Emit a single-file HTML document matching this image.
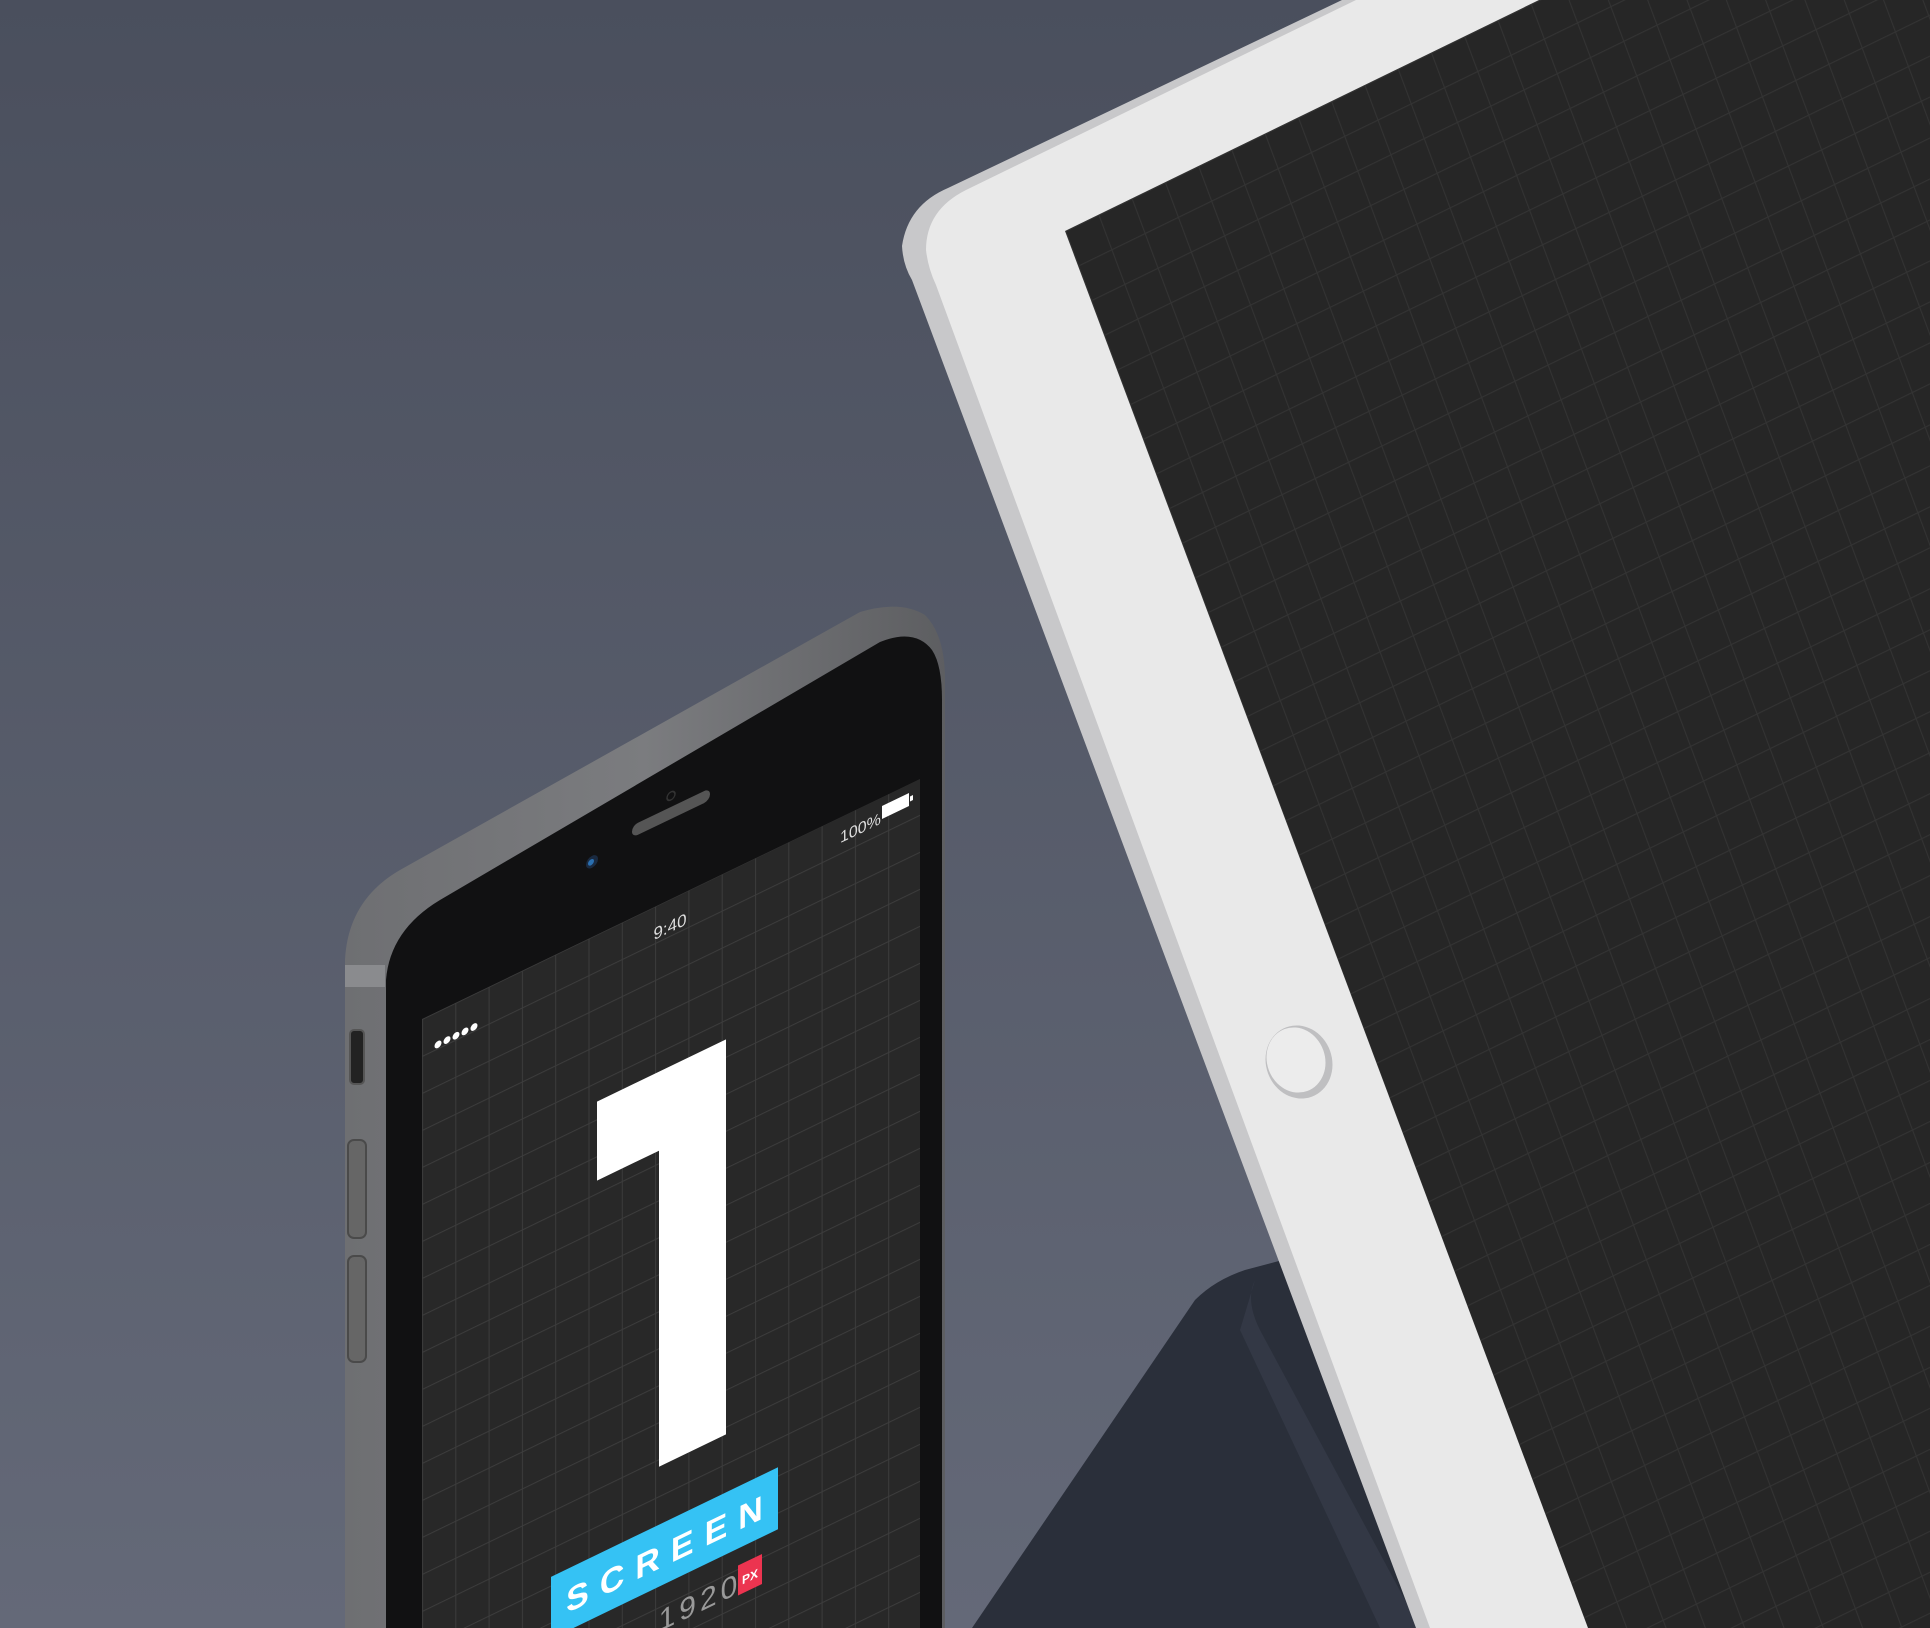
<!DOCTYPE html>
<html><head><meta charset="utf-8"><style>
html,body{margin:0;padding:0;width:1930px;height:1628px;overflow:hidden;background:#525868}
svg{display:block}
</style></head><body>
<svg width="1930" height="1628" viewBox="0 0 1930 1628" xmlns="http://www.w3.org/2000/svg">
<defs>
<linearGradient id="bg" x1="0" y1="0" x2="0" y2="1">
<stop offset="0" stop-color="#4a4f5d"/><stop offset="1" stop-color="#646978"/>
</linearGradient>
<linearGradient id="body" x1="0" y1="0" x2="1" y2="0">
<stop offset="0" stop-color="#6e6f72"/><stop offset="0.5" stop-color="#7b7c7f"/><stop offset="1" stop-color="#5d5e61"/>
</linearGradient>
<pattern id="pg" width="37" height="37" patternUnits="userSpaceOnUse" patternTransform="matrix(0.9,-0.436,0,1,422,1019)">
<rect width="37" height="37" fill="#282828"/>
<path d="M0 0.5H37M0.5 0V37" stroke="#3c3c3c" stroke-width="1.2"/>
</pattern>
<pattern id="ig" width="37" height="37" patternUnits="userSpaceOnUse" patternTransform="matrix(0.899,-0.438,0.35,0.937,1065,231)">
<rect width="37" height="37" fill="#262626"/>
<path d="M0 0.5H37M0.5 0V37" stroke="#333" stroke-width="1.2"/>
</pattern>
</defs>
<rect width="1930" height="1628" fill="url(#bg)"/>

<!-- smart cover -->
<path d="M972 1628 L1195 1300 Q1215 1280 1245 1270 L1320 1250 L1420 1628 Z" fill="#2a2f3a"/>
<path d="M1255 1280 Q1245 1300 1260 1330 L1420 1628 L1380 1628 L1240 1330 Z" fill="#333845"/>

<!-- iPad -->
<path d="M1342 0 L948 188 Q908 205 902 246 Q903 265 912 280 L1416 1628 L1930 1628 L1930 0 Z" fill="#c8c8ca"/>
<path d="M1356 0 L966 190 Q926 210 926 250 Q928 268 936 285 L1430 1628 L1930 1628 L1930 0 Z" fill="#e9e9e9"/>
<path d="M1065 231 L1539 0 L1930 0 L1930 1628 L1588 1628 Z" fill="url(#ig)"/>
<ellipse cx="1299" cy="1062" rx="33" ry="37" fill="#bfbfc1" transform="rotate(-20 1299 1062)"/>
<ellipse cx="1296" cy="1060" rx="29" ry="33" fill="#ececec" transform="rotate(-20 1296 1060)"/>

<!-- iPhone body -->
<path d="M345 1628 L345 960 Q348 900 400 870 L860 612 Q900 600 925 615 Q945 635 945 680 L945 1628 Z" fill="url(#body)"/>
<rect x="345" y="965" width="40" height="22" fill="#8a8b8e"/>
<path d="M386 1628 L386 980 Q390 930 440 900 L880 642 Q915 628 932 650 Q942 665 942 700 L942 1628 Z" fill="#111112"/>
<rect x="350" y="1030" width="14" height="54" rx="4" fill="#222" stroke="#555" stroke-width="2"/>
<rect x="348" y="1140" width="18" height="98" rx="6" fill="#666" stroke="#4a4a4a" stroke-width="2"/>
<rect x="348" y="1256" width="18" height="106" rx="6" fill="#666" stroke="#4a4a4a" stroke-width="2"/>
<path d="M422 1019 L920 779 L920 1628 L422 1628 Z" fill="url(#pg)"/>
<g transform="matrix(1,-0.48,0,1,0,0)">
<rect x="632" y="1129" width="78" height="12" rx="6" fill="#555"/>
<circle cx="592" cy="1146" r="6" fill="#1a2a40"/>
<circle cx="591" cy="1146" r="3" fill="#2a6fb0"/>
<circle cx="671" cy="1118" r="4" fill="none" stroke="#333" stroke-width="1.5"/>
</g>
<g transform="matrix(1,-0.483,0,1,0,0)" font-family="Liberation Sans, sans-serif">
<text x="670" y="1256" fill="#ddd" font-size="17" text-anchor="middle">9:40</text>
<text x="840" y="1249" fill="#ddd" font-size="16">100%</text>
<rect x="882" y="1232" width="27" height="13" fill="#fff"/>
<rect x="910" y="1236" width="3" height="5" fill="#fff"/>
<g fill="#fff"><circle cx="438" cy="1256" r="3.5"/><circle cx="447" cy="1256" r="3.5"/><circle cx="456" cy="1256" r="3.5"/><circle cx="465" cy="1256" r="3.5"/><circle cx="474" cy="1256" r="3.5"/></g>
<path d="M597 1390 L726 1390 L726 1785 L659 1785 L659 1469 L597 1469 Z" fill="#fff"/>
<rect x="551" y="1843" width="227" height="62" fill="#35c2f4"/>
<text x="670" y="1887" fill="#fff" font-size="34" font-weight="bold" text-anchor="middle" letter-spacing="11">SCREEN</text>
<text x="700" y="1950" fill="#999" font-size="30" text-anchor="middle" letter-spacing="4">1920</text>
<rect x="738" y="1922" width="24" height="30" fill="#ec3450"/>
<text x="750" y="1943" fill="#fff" font-size="12" font-weight="bold" text-anchor="middle">PX</text>
</g>
</svg>
</body></html>
